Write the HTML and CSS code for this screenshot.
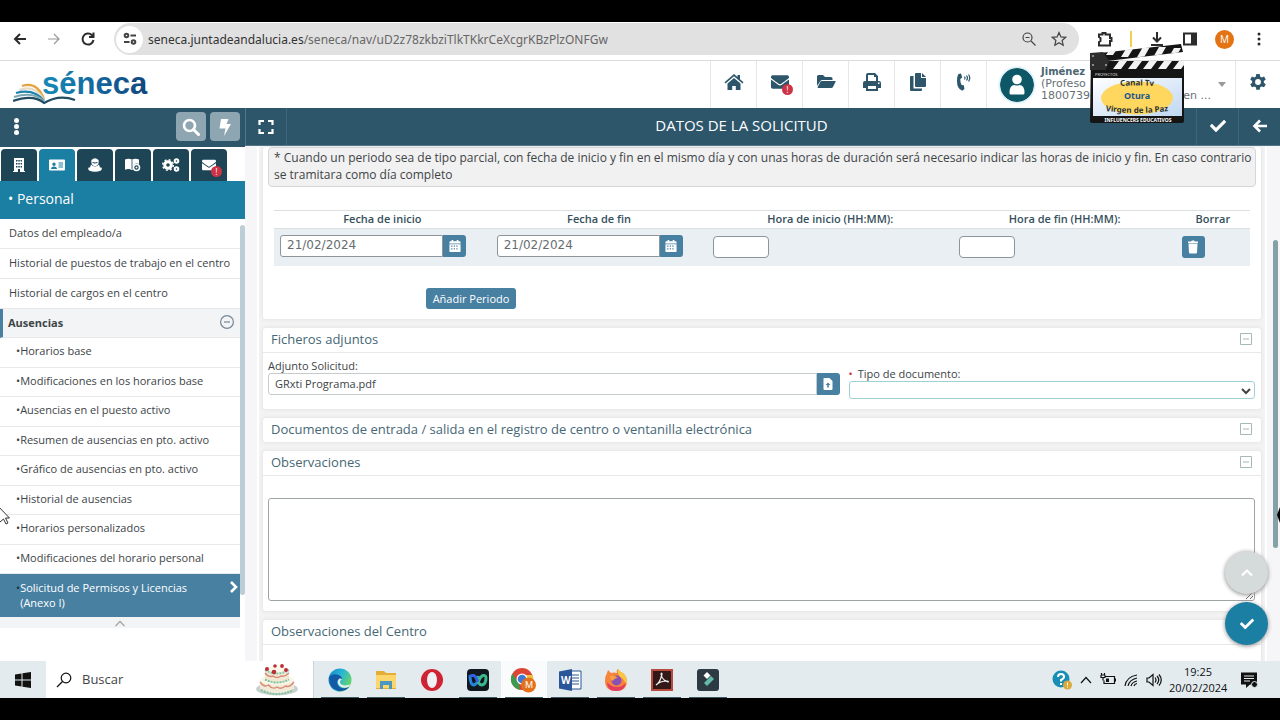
FILE: index.html
```
<!DOCTYPE html>
<html lang="es">
<head>
<meta charset="utf-8">
<meta name="viewport" content="width=device-width, initial-scale=1">
<title>Séneca - Datos de la solicitud</title>
<link rel="stylesheet" href="styles.css">
</head>
<body>
<svg class="symbols" aria-hidden="true">
  <symbol id="i-check" viewBox="0 0 512 512"><path d="M173.9 439.4l-166.400-166.400c-10-10-10-26.200 0-36.200l36.200-36.200c10-10 26.200-10 36.200 0L192 312.700 432.100 72.600c10-10 26.200-10 36.200 0l36.200 36.200c10 10 10 26.200 0 36.200l-294.400 294.400c-10 10-26.200 10-36.200 0z"/></symbol>
  <symbol id="i-mail" viewBox="0 0 512 512"><path d="M502.300 190.800c3.900-3.100 9.700-.2 9.700 4.700V400c0 26.500-21.500 48-48 48H48c-26.500 0-48-21.500-48-48V195.600c0-5 5.700-7.800 9.700-4.700 22.400 17.400 52.100 39.500 154.100 113.600 21.100 15.400 56.700 47.800 92.200 47.600 35.700.3 72-32.800 92.300-47.600 102-74.100 131.600-96.300 154-113.700zM256 320c23.200.4 56.600-29.200 73.400-41.400 132.700-96.300 142.800-104.700 173.400-128.700 5.800-4.500 9.200-11.500 9.200-18.900v-19c0-26.500-21.500-48-48-48H48C21.500 64 0 85.500 0 112v19c0 7.400 3.400 14.300 9.200 18.900 30.600 23.900 40.700 32.400 173.400 128.700 16.800 12.200 50.200 41.800 73.400 41.400z"/></symbol>
  <symbol id="i-cal" viewBox="0 0 14 14"><path fill-rule="evenodd" d="M3 0h2v1.500h4V0h2v1.500h1.500q1 0 1 1V4H.5V2.500q0-1 1-1H3zM.5 5h13v8q0 1-1 1h-11q-1 0-1-1zM2.500 6.500V8H4V6.500zm3 0V8H7V6.500zm3 0V8H10V6.500zm-6 3V11H4V9.500zm3 0V11H7V9.500zm3 0V11H10V9.500z"/></symbol>
  <symbol id="i-minus" viewBox="0 0 12 12"><path d="M.5.5h11v11H.5zM3 6h6" fill="none" stroke="currentColor"/></symbol>
  <symbol id="i-gear" viewBox="0 0 16 16"><path fill-rule="evenodd" d="M6.500 0h3l.4 2.200 1.400.8 2.100-.8 1.500 2.600-1.700 1.400v1.600l1.700 1.400-1.500 2.600-2.100-.8-1.400.8-.4 2.200h-3l-.4-2.200-1.400-.8-2.100.8-1.500-2.600 1.700-1.400V6.200L1.100 4.800l1.500-2.600 2.100.8 1.400-.8zM8 4.500a2.600 2.600 0 1 0 0 5.200 2.600 2.600 0 0 0 0-5.200z"/></symbol>
</svg>

<div class="browser">
  <button class="plain" aria-label="Atrás"><svg class="ic16" viewBox="0 0 16 16"><path class="line2" d="M14 8H3M8 3L3 8l5 5"/></svg></button>
  <button class="plain faded" aria-label="Adelante"><svg class="ic16" viewBox="0 0 16 16"><path class="line1" d="M2 8h11M8 3l5 5-5 5"/></svg></button>
  <button class="plain" aria-label="Recargar"><svg class="ic16" viewBox="0 0 16 16"><path class="line2" d="M13.500 9A5.500 5.500 0 1 1 12 4.200L13.500 5.700M13.500 1.500v4.500H9"/></svg></button>
  <div class="omnibox">
    <span class="siteinfo"><svg class="ic16" viewBox="0 0 16 16"><path class="line2" d="M8.500 4.500H14M2 11h5.500"/><circle class="line2" cx="4.500" cy="4.500" r="1.800"/><circle class="line2" cx="11.500" cy="11" r="1.800"/></svg></span>
    <span class="url">seneca.juntadeandalucia.es<span>/seneca/nav/uD2z78zkbziTlkTKkrCeXcgrKBzPlzONFGw</span></span>
    <svg class="ic16" viewBox="0 0 16 16"><circle class="line1" cx="6.500" cy="6.500" r="4.500"/><path class="line1" d="M10 10l4.500 4.500M4.500 6.500h4"/></svg>
    <svg class="ic16" viewBox="0 0 16 16"><path class="line1" d="M8 1.500l1.900 4.400 4.800.4-3.600 3.200 1.100 4.700L8 11.700l-4.200 2.500 1.100-4.700L1.300 6.300l4.800-.4z"/></svg>
  </div>
  <div class="extensions">
    <svg class="ic16" viewBox="0 0 16 16"><path class="line2" d="M2 3.500h3.500V2h3v1.500H13V7h1.500v3H13v4.500H2V11l1.500-1V7L2 6z"/></svg>
    <span class="ext-mark"></span>
    <svg class="ic16" viewBox="0 0 16 16"><path class="line2" d="M8 1v9M4 6.500L8 10.500l4-4M2 14h12"/></svg>
    <svg class="ic16" viewBox="0 0 16 16"><path class="line2" d="M2 2.500h12v11H2z"/><path d="M9 2h5v12H9z"/></svg>
    <span class="profile">M</span>
    <svg class="ic16" viewBox="0 0 16 16"><circle cx="8" cy="3" r="1.500"/><circle cx="8" cy="8" r="1.500"/><circle cx="8" cy="13" r="1.500"/></svg>
  </div>
</div>

<header class="header">
  <div class="logo">
    <svg viewBox="0 0 136 42" role="img" aria-label="séneca">
      <defs><linearGradient id="lg"><stop offset="0" stop-color="#168bb8"/><stop offset=".5" stop-color="#14689f"/><stop offset="1" stop-color="#12467c"/></linearGradient></defs>
      <text x="29" y="31" class="logo-text" fill="url(#lg)">séneca</text>
      <g fill="none" stroke-width="2.200">
        <path d="M9 23Q24 18 31 36" stroke="#e8a23d"/><path d="M6 27Q22 21 31 37" stroke="#e3dcca"/><path d="M3 30Q21 25 31 38" stroke="#1b83ac"/><path d="M1 34Q20 28 31 38" stroke="#7ca6b4"/><path d="M0 38Q20 31 31 40Q46 31 62 37" stroke="#214c62"/>
      </g>
    </svg>
  </div>
  <nav class="quick">
    <button aria-label="Inicio"><svg class="ic20" viewBox="0 0 20 20"><path d="M10 6l6.500 5.500V18h-4.700v-4H8.200v4H3.500v-6.500zM10 2l3.500 3V3H16v4.200l3.500 3-1 1.200L10 4.300l-8.500 7.100-1-1.200z"/></svg></button>
    <button aria-label="Mensajes" class="has-badge"><svg class="ic18"><use href="#i-mail"/></svg><span class="badge">!</span></button>
    <button aria-label="Carpetas"><svg class="ic20" viewBox="0 0 20 20"><path d="M1 14V4.500Q1 3 2.500 3H7l2 2h6q1.500 0 1.500 1.500V8H6.500Q5 8 4.200 9.300zM5.600 9h13.600q.8 0 .4.800L17 15q-.6 1-1.800 1H2.200q-1 0-.5-.9l2.600-5.200Q4.800 9 5.600 9z"/></svg></button>
    <button aria-label="Imprimir"><svg class="ic18" viewBox="0 0 18 18"><path fill-rule="evenodd" d="M3 8V2q0-2 2-2h7l3 3v5h1q2 0 2 2v5h-3v3H3v-3H0v-5q0-2 2-2zM5 2v6h8V4h-2V2zm0 11v3h8v-3zm10-3.500v1.500h1.500V9.500z"/></svg></button>
    <button aria-label="Copiar"><svg class="ic18" viewBox="0 0 18 18"><path d="M7 0h5v5h5v8q0 1-1 1H7q-1 0-1-1V1q0-1 1-1zm6 0l4 4h-4zM4.500 3v12.500H13V17q0 1-1 1H2q-1 0-1-1V4q0-1 1-1z"/></svg></button>
    <button aria-label="Llamar"><svg class="ic18" viewBox="0 0 18 18"><path d="M3.500 1l2.500-.5 1.200 4-1.900 1.500q-.3 3 1.300 6l2.200.2L9.500 16l-2.300 1.700Q2 16 2 8 2 3 3.500 1z"/><path class="line1" d="M9.500 3.500q1.200 1.500 0 3M11.500 2.500q2 2.500 0 5M13.500 1.500q2.500 3.500 0 7"/></svg></button>
  </nav>
  <button class="user">
    <svg class="avatar" viewBox="0 0 34 34"><circle cx="17" cy="17" r="17" fill="#0e5767"/><circle cx="17" cy="11.500" r="4.800" fill="#fff"/><path d="M9.500 25q0-8 5-8 2.500 1.200 5 0 5 0 5 8 0 1.500-1.500 1.500H11q-1.500 0-1.500-1.500z" fill="#fff"/></svg>
    <span class="user-text"><strong>Jiménez</strong><span>(Profeso</span><span class="center-name"><span>1800739</span><span>en ...</span></span></span>
    <i class="caret"></i>
  </button>
  <button class="settings" aria-label="Configuración"><svg class="ic18"><use href="#i-gear"/></svg></button>
</header>

<div class="app">
  <aside class="sidebar">
    <div class="side-tools">
      <button class="dots" aria-label="Menú"><i></i><i></i><i></i></button>
      <button class="tool" aria-label="Buscar"><svg class="ic18" viewBox="0 0 18 18"><circle cx="7.500" cy="7.500" r="5.500" fill="none" stroke="currentColor" stroke-width="2.600"/><path d="M11.500 11.500l5 5" stroke="currentColor" stroke-width="3" stroke-linecap="round"/></svg></button>
      <button class="tool" aria-label="Accesos rápidos"><svg class="ic18" viewBox="0 0 18 18"><path d="M5 1h7.500l-2 5h4.500L8 18l1.500-7.500H3.500z"/></svg></button>
    </div>
    <div class="tabs">
      <button aria-label="Centro"><svg class="ic16" viewBox="0 0 16 16"><path fill-rule="evenodd" d="M3 1h10v13h1v1H9v-3H7v3H2v-1h1zm2 2v1.500h1.500V3zm2.300 0v1.500h1.500V3zm2.300 0v1.500H11V3zM5 6v1.500h1.500V6zm2.300 0v1.500h1.500V6zm2.300 0v1.500H11V6zM5 9v1.500h1.500V9zm2.300 0v1.500h1.500V9zm2.300 0v1.500H11V9z"/></svg></button>
      <button class="active" aria-label="Personal"><svg class="ic16" viewBox="0 0 16 16"><path fill-rule="evenodd" d="M1 2.500h14q1 0 1 1v9q0 1-1 1H1q-1 0-1-1v-9q0-1 1-1zM5 5.500a1.700 1.700 0 1 0 0 3.400 1.700 1.700 0 0 0 0-3.400zM2 12h6q0-2.500-3-2.500T2 12zm7.500-6.500v1H14v-1zm0 2v1H14v-1zm0 2v1H14v-1z"/></svg></button>
      <button aria-label="Alumnado"><svg class="ic16" viewBox="0 0 16 16"><path d="M4.500 3Q8-.5 11.500 3q.8 4-1.500 5.500-2 1.500-4 0Q3.700 7 4.500 3z"/><path d="M4 7.500q4 4 8 0l1 3h1.500q1 1.500-.5 3-6 2.500-12 0-1.500-1.500-.5-3H3z"/><path d="M5.500 5.500q2.500 1 5 0" fill="none" stroke="#1d4555"/></svg></button>
      <button aria-label="Enseñanzas"><svg class="ic16" viewBox="0 0 16 16"><path d="M0 2.500Q3.500.8 7 2.500q3.500-1.700 7 0V7q-3-1.500-5 .8T8.300 12L7 13q-3.500-1.700-7-.2z"/><circle cx="11.500" cy="10.500" r="3" fill="none" stroke="currentColor" stroke-width="1.600"/><circle cx="11.500" cy="10.500" r="1"/><path d="M6.600 2.500h.8V12h-.8z" fill="#1d4555"/></svg></button>
      <button aria-label="Utilidades"><svg class="ic18" viewBox="0 0 18 16"><g fill="none" stroke="currentColor"><circle cx="6" cy="8" r="3.300" stroke-width="3"/><circle cx="6" cy="8" r="5.300" stroke-width="1.500" stroke-dasharray="2 2.160"/><circle cx="14.500" cy="4" r="1.800" stroke-width="2"/><circle cx="14.500" cy="12" r="1.800" stroke-width="2"/></g></svg></button>
      <button aria-label="Comunicaciones" class="has-badge"><svg class="ic14"><use href="#i-mail"/></svg><span class="badge">!</span></button>
    </div>
    <h2 class="side-title">• Personal</h2>
    <div class="side-body">
      <div class="menu-col">
        <ul class="menu">
          <li><a href="#">Datos del empleado/a</a></li>
          <li><a href="#">Historial de puestos de trabajo en el centro</a></li>
          <li><a href="#">Historial de cargos en el centro</a></li>
          <li class="open"><a href="#">Ausencias <svg class="ic14" viewBox="0 0 14 14"><circle class="line1" cx="7" cy="7" r="6.400"/><path class="line1" d="M4 7h6"/></svg></a></li>
        </ul>
        <ul class="menu submenu">
          <li><a href="#">Horarios base</a></li>
          <li><a href="#">Modificaciones en los horarios base</a></li>
          <li><a href="#">Ausencias en el puesto activo</a></li>
          <li><a href="#">Resumen de ausencias en pto. activo</a></li>
          <li><a href="#">Gráfico de ausencias en pto. activo</a></li>
          <li><a href="#">Historial de ausencias</a></li>
          <li><a href="#">Horarios personalizados</a></li>
          <li><a href="#">Modificaciones del horario personal</a></li>
        </ul>
        <a href="#" class="current"><span>Solicitud de Permisos y Licencias (Anexo I)</span><svg class="ic14" viewBox="0 0 14 14"><path d="M5 2l5 5-5 5" fill="none" stroke="currentColor" stroke-width="2.600"/></svg></a>
        <div class="fold"><svg class="ic14" viewBox="0 0 14 14"><path d="M2.500 10L7 5.500l4.500 4.500" fill="none" stroke="currentColor" stroke-width="1.500"/></svg></div>
      </div>
      <i class="side-scroll"></i>
    </div>
  </aside>

  <main class="main">
    <div class="title-bar">
      <button aria-label="Pantalla completa"><svg class="ic16" viewBox="0 0 16 16"><path d="M1.500 6V2H6M10 2h4.500v4M14.500 10v4H10M6 14H1.500v-4" fill="none" stroke="currentColor" stroke-width="2.200"/></svg></button>
      <h1>DATOS DE LA SOLICITUD</h1>
      <button aria-label="Aceptar"><svg class="ic16"><use href="#i-check"/></svg></button>
      <button aria-label="Volver"><svg class="ic16" viewBox="0 0 16 16"><path d="M15 8H3M8 2.500L2.500 8 8 13.500" fill="none" stroke="currentColor" stroke-width="2.600"/></svg></button>
    </div>
    <div class="scroller">
      <div class="content">
        <section class="card first">
          <p class="note">* Cuando un periodo sea de tipo parcial, con fecha de inicio y fin en el mismo día y con unas horas de duración será necesario indicar las horas de inicio y fin. En caso contrario se tramitara como día completo</p>
          <table class="periods">
            <colgroup><col class="c-date"><col class="c-date"><col class="c-start"><col class="c-end"><col></colgroup>
            <thead><tr><th id="h1">Fecha de inicio</th><th id="h2">Fecha de fin</th><th id="h3">Hora de inicio (HH:MM):</th><th id="h4">Hora de fin (HH:MM):</th><th>Borrar</th></tr></thead>
            <tbody><tr>
              <td><div class="date"><input type="text" value="21/02/2024" aria-labelledby="h1"><button aria-label="Elegir fecha de inicio"><svg class="ic12"><use href="#i-cal"/></svg></button></div></td>
              <td><div class="date"><input type="text" value="21/02/2024" aria-labelledby="h2"><button aria-label="Elegir fecha de fin"><svg class="ic12"><use href="#i-cal"/></svg></button></div></td>
              <td><input class="hour" type="text" aria-labelledby="h3"></td>
              <td><input class="hour" type="text" aria-labelledby="h4"></td>
              <td><button class="delete" aria-label="Borrar periodo"><svg class="ic14" viewBox="0 0 14 14"><path d="M2 1.500h3L6 .5h2l1 1h3V3H2zM2.500 3.500h9l-.5 9q-.1 1-1 1H4q-.9 0-1-1z"/></svg></button></td>
            </tr></tbody>
          </table>
          <button class="add">Añadir Periodo</button>
        </section>

        <section class="card">
          <h2>Ficheros adjuntos <button aria-label="Plegar"><svg class="ic12"><use href="#i-minus"/></svg></button></h2>
          <div class="files">
            <div class="field">
              <label for="file">Adjunto Solicitud:</label>
              <div class="file"><input id="file" type="text" value="GRxti Programa.pdf"><button aria-label="Adjuntar fichero"><svg class="ic12" viewBox="0 0 12 12"><path fill-rule="evenodd" d="M2 0h5.500L10.500 3v8q0 1-1 1h-7q-1 0-1-1V1q0-1 .5-1zM6 4.500L3.500 7h1.700v2.500h1.600V7h1.700z"/></svg></button></div>
            </div>
            <div class="field type">
              <label for="type"><span class="required">•</span>Tipo de documento:</label>
              <div class="select"><select id="type"><option></option></select><svg class="ic12" viewBox="0 0 12 12"><path d="M2 4l4 4 4-4" fill="none" stroke="currentColor" stroke-width="2"/></svg></div>
            </div>
          </div>
        </section>

        <section class="card closed"><h2>Documentos de entrada / salida en el registro de centro o ventanilla electrónica <button aria-label="Desplegar"><svg class="ic12"><use href="#i-minus"/></svg></button></h2></section>

        <section class="card">
          <h2>Observaciones <button aria-label="Plegar"><svg class="ic12"><use href="#i-minus"/></svg></button></h2>
          <div class="notes"><textarea aria-label="Observaciones"></textarea></div>
        </section>

        <section class="card last"><h2>Observaciones del Centro</h2></section>
      </div>
      <i class="main-scroll"></i>
    </div>
    <div class="floating">
      <button class="up" aria-label="Subir"><svg class="ic14" viewBox="0 0 14 14"><path d="M2 9.500l5-5 5 5" fill="none" stroke="currentColor" stroke-width="2.200"/></svg></button>
      <button class="ok" aria-label="Aceptar"><svg class="ic14"><use href="#i-check"/></svg></button>
    </div>
  </main>
</div>

<footer class="taskbar">
  <button class="start" aria-label="Inicio"><svg class="ic16" viewBox="0 0 16 16"><path d="M0 2.500l6.500-1v6H0zM7.500 1.300L16 0v7.500H7.500zM0 8.500h6.500v6L0 13.500zM7.500 8.500H16V16l-8.500-1.300z"/></svg></button>
  <label class="search"><svg class="ic16" viewBox="0 0 16 16"><circle class="line1" cx="10" cy="6" r="4.800"/><path class="line1" d="M6.500 9.500L1 15"/></svg><input type="text" placeholder="Buscar" aria-label="Buscar">
    <svg class="cake" viewBox="0 0 44 33"><ellipse cx="22" cy="26" rx="21" ry="6.500" fill="#c9d0cd"/><path d="M5 17v9q17 9 34 0v-9z" fill="#f2ead8"/><ellipse cx="22" cy="17" rx="17" ry="5" fill="#fbf5e6"/><path d="M10 7v10q12 6 24 0V7z" fill="#f3e8d3"/><ellipse cx="22" cy="7" rx="12" ry="4" fill="#fff8ea"/><path d="M5 19q4 6 8.500 3 4 5 8.500 2 4 3 8.500-1 4 2 8.500-4M10 10q4 5 8 3 4 3 8 0 4 1 8-3" fill="none" stroke="#d78d77" stroke-width="1.400"/><path d="M6 27q16 8 32 0M10 16.500q12 6 24 0M10 7q12 7 24 0" fill="none" stroke="#7fc3a5" stroke-width="2" stroke-dasharray="2 1"/><g fill="#b92f37"><circle cx="12" cy="6" r="2"/><circle cx="19" cy="9" r="2.300"/><circle cx="20" cy="3" r="1.800"/><circle cx="27" cy="3" r="1.900"/><circle cx="31" cy="7" r="2"/></g></svg>
  </label>
  <div class="apps">
    <button aria-label="Edge"><svg class="ic24" viewBox="0 0 24 24"><defs><linearGradient id="eg" x2="1" y2=".5"><stop offset="0" stop-color="#1586c9"/><stop offset=".55" stop-color="#28b6d5"/><stop offset="1" stop-color="#65d36d"/></linearGradient></defs><circle cx="12" cy="12" r="11.500" fill="url(#eg)"/><path d="M1 10Q3 5.500 9 6.500q5 1 5 5-3-1.500-4.500 1-1.500 4 3 7 4.500 2 9-1Q17 24 10 23 1 20.500 1 10z" fill="#1459a5"/><path d="M14 11.500q-2.500 1-2 3.500 2 4 10 1.500l-.8 2q-6 3-10-1-3-4 .3-7 1.500-.5 2.500 1z" fill="#e4edf1"/></svg></button>
    <button aria-label="Explorador"><svg class="ic24" viewBox="0 0 24 24"><path d="M2 3h8l2 2h10v16H2z" fill="#e3ad36"/><path d="M2 7h20v13H2z" fill="#fcd66b"/><path d="M6 13h12v8h-3v-4H9v4H6z" fill="#4a98bf"/></svg></button>
    <button aria-label="Opera" class="idle"><svg class="ic24" viewBox="0 0 24 24"><circle cx="12" cy="12" r="11" fill="#cf2333"/><ellipse cx="12" cy="12" rx="5" ry="8" fill="#edf1f3"/></svg></button>
    <button aria-label="Webex"><svg class="ic24" viewBox="0 0 24 24"><rect x="1" y="1" width="22" height="22" rx="4" fill="#10191f"/><g fill="none" stroke-width="3"><path d="M4 7q0 10 4 10 4-1 5-9" stroke="#2584df"/><path d="M11 8q1 9 5 9 4-1 4-7 0-3-3-2.500Q14 8.500 12 15" stroke="#3bb88c"/><path d="M4.500 9q0-2 3-1.500 3 1 4 6.500" stroke="#3560e4"/></g></svg></button>
    <button aria-label="Chrome" class="current-app"><svg class="ic28" viewBox="0 0 28 28"><circle cx="12" cy="13" r="11" fill="#dd4535"/><path d="M2.500 7.500L9 18l1 6A11 11 0 0 1 2.500 7.500z" fill="#3b9b50"/><path d="M12 9h10.500Q25 15 20 20z" fill="#efc23d"/><circle cx="12" cy="13" r="5.500" fill="#fff"/><circle cx="12" cy="13" r="4.300" fill="#3e79d5"/><circle cx="18.500" cy="19" r="7.500" fill="#e4711b"/><text x="15" y="22" class="app-m" fill="#fff">M</text></svg></button>
    <button aria-label="Word"><svg class="ic24" viewBox="0 0 24 24"><path d="M11 3h12v18H11z" fill="#fff" stroke="#2a5699"/><path d="M14 7h7M14 10h7M14 13h7M14 16h7" stroke="#2a5699"/><path d="M1 3.500L14 1v22L1 20.500z" fill="#2a5699"/><text x="3" y="16" class="app-w" fill="#fff">W</text></svg></button>
    <button aria-label="Firefox"><svg class="ic24" viewBox="0 0 24 24"><path d="M3 5l1-3 3 3q3-1 6 0-1-3 1-4 2 3 5 4 4 4 4 8 0 10-11 10T1 13q0-5 2-8z" fill="#f6843a"/><path d="M14 1q2 3 5 4 6 6 3 13-1-7-6-9-3-4-2-8z" fill="#fbc643"/><path d="M3 14q0 9 9 9t10-9q-3 5-9 5T3 14z" fill="#e43c63"/><circle cx="12.500" cy="12.500" r="5" fill="#8850b8"/><path d="M6 8q5-1 8 2-4 0-5 3-3-1-3-5z" fill="#f7a03f"/></svg></button>
    <button aria-label="Acrobat"><svg class="ic24" viewBox="0 0 24 24"><path d="M2 2h20v20H2z" fill="#321817" stroke="#b94a3e" stroke-width="2"/><path d="M6 17q4-2 6-11 0-2-1 0 1 6 7 8 1-1-1-1-7 0-11 4z" fill="none" stroke="#eee" stroke-width="1.200"/></svg></button>
    <button aria-label="Filmora"><svg class="ic24" viewBox="0 0 24 24"><rect x="1" y="1" width="22" height="22" rx="3" fill="#2d3a43"/><path d="M11 4l3.500 3.500L11 11 7.500 7.500z" fill="#fff"/><path d="M15 8l3 3-7 7-3-3z" fill="#64b9ab"/></svg></button>
  </div>
  <div class="tray">
    <svg class="ic20" viewBox="0 0 20 20"><circle cx="9" cy="9" r="8.500" fill="#188eb4"/><path d="M6 7q0-3 3-3t3 2.700Q12 8.500 9 10v1.500M9 13v2" fill="none" stroke="#fff" stroke-width="2"/><circle cx="15.500" cy="15" r="4.500" fill="#dca93b"/><path d="M15.500 12.500v3M15.500 16.500v1" stroke="#fff"/></svg>
    <svg class="ic14" viewBox="0 0 14 14"><path class="line1" d="M2 10l5-5.500L12 10"/></svg>
    <svg class="ic16" viewBox="0 0 16 16"><path class="line1" d="M5 4.500h9.500v7H4v-3M15.500 6.500v3M1 3h4M1.500 1v2M4.500 1v2M1 3v2.500h4V3M3 5.500v3"/><path d="M6 6.500h3v3.500H6z"/></svg>
    <svg class="ic16" viewBox="0 0 16 16"><g class="line1"><path d="M2 14Q3 5 14 3M5 14q1-6 9-8M8 14q1-4 6-5M11 14q.5-2 3-2.500"/></g></svg>
    <svg class="ic16" viewBox="0 0 16 16"><path class="line1" d="M1 6h2l4-3.500v11L3 10H1zM9 5.500q2 2.500 0 5M11 4q3.500 4 0 8M13 2.500q4.500 5.500 0 11"/></svg>
    <div class="clock"><span>19:25</span><span>20/02/2024</span></div>
    <svg class="ic18" viewBox="0 0 18 18"><path d="M1 1.500h16v12h-7L6 17v-3.500H1z"/><path d="M4 5h10M4 7.500h10M4 10h6" stroke="#e3ebef"/><circle cx="14.500" cy="13.500" r="3" stroke="#e3ebef"/></svg>
  </div>
</footer>

<svg class="clapper" viewBox="0 0 96 80" role="img" aria-label="Canal Tv Otura Virgen de la Paz">
  <defs><clipPath id="top-bar"><path d="M4 9L92 0l2 8L16 17z"/></clipPath><clipPath id="low-bar"><path d="M16 17h79v8H16z"/></clipPath><linearGradient id="slate" x2="1" y2="1"><stop offset="0" stop-color="#fff"/><stop offset="1" stop-color="#bfd7f2"/></linearGradient></defs>
  <path d="M2 10L92 0l2 8-76 9h77v60q0 2-2 2H3q-2 0-2-2z" fill="#151515"/>
  <path d="M1 9l13-1 6 9-3 9H1z" fill="#2d2d2d"/>
  <g clip-path="url(#top-bar)"><path d="M20 4l7 0 8 14h-7zM35 3h7l8 14h-7zM50 1h7l8 14h-7zM65 0h7l8 13h-7zM80-1h7l8 12h-7z" fill="#f3f3f3" transform="matrix(-1 0 0 1 112 0)"/></g>
  <g clip-path="url(#low-bar)"><path d="M30 17h8l-6 8h-8zM45 17h8l-6 8h-8zM60 17h8l-6 8h-8zM75 17h8l-6 8h-8zM90 17h8l-6 8h-8z" fill="#f3f3f3"/></g>
  <circle cx="4" cy="12" r="1" fill="#aaa"/><circle cx="4" cy="21" r="1" fill="#aaa"/><circle cx="17" cy="21" r="1" fill="#aaa"/>
  <text x="6" y="32" class="clap-tiny" fill="#ddd">PROYECTOS</text>
  <path d="M4 34h89v38H4z" fill="url(#slate)"/>
  <ellipse cx="48" cy="54" rx="36" ry="16.500" fill="#ffd75e"/>
  <path id="arc-top" d="M14 44Q48 39 82 44" fill="none"/><path id="arc-low" d="M10 66Q48 72 86 66" fill="none"/>
  <text class="clap-text" fill="#2c3437"><textPath href="#arc-top" startOffset="50%">Canal Tv</textPath></text>
  <text x="48" y="55" class="clap-main" fill="#23558d">Otura</text>
  <text class="clap-text" fill="#2c3437"><textPath href="#arc-low" startOffset="50%">Virgen de la Paz</textPath></text>
  <text x="49" y="78" class="clap-foot" fill="#fff">INFLUENCERS EDUCATIVOS</text>
</svg>
<svg class="pointer" viewBox="0 0 12 20"><path d="M-4-2L9.500 12H5.500l2.500 5-2 1-2.500-5L0 16" fill="#fff" stroke="#333"/></svg>
<svg class="edge-pointer" viewBox="0 0 3 16"><path d="M3 0v16L0 8z"/></svg>
</body>
</html>
```
FILE: styles.css
```
:root {
  --navy: #2d566b;
  --dark: #1d4555;
  --teal: #1b7ea3;
  --blue: #4880a2;
  --ink: #3d4447;
  --line: #e6e8e9;
}
* { box-sizing: border-box; }
body {
  margin: 0;
  height: 100vh;
  padding: 22px 0;
  display: flex;
  flex-direction: column;
  overflow: hidden;
  background: #000;
  color: var(--ink);
  font: 12px/17px "Open Sans", "Noto Sans", sans-serif;
}
button {
  display: flex;
  align-items: center;
  justify-content: center;
  flex: none;
  padding: 0;
  border: 0;
  background: none;
  color: inherit;
  font: inherit;
}
input, select, textarea { font: inherit; color: inherit; min-width: 0; }
h1, h2, p, ul { margin: 0; padding: 0; font-weight: 400; }
a { color: inherit; text-decoration: none; }
svg { flex: none; fill: currentColor; }
.symbols { position: absolute; width: 0; height: 0; }
.ic12 { width: 12px; height: 12px; }
.ic14 { width: 14px; height: 14px; }
.ic16 { width: 16px; height: 16px; }
.ic18 { width: 18px; height: 18px; }
.ic20 { width: 20px; height: 20px; }
.ic24 { width: 24px; height: 24px; }
.ic28 { width: 28px; height: 28px; }
.line1, .line2 { fill: none; stroke: currentColor; stroke-width: 1.2; }
.line2 { stroke-width: 2; }

/* Browser bar */
.browser {
  flex: none;
  height: 39px;
  display: flex;
  align-items: center;
  gap: 18px;
  padding: 0 13px 4px 12px;
  background: #fff;
  border-bottom: 1px solid #dcdcdc;
  color: #2b2b2b;
}
.faded { color: #999; }
.omnibox {
  flex: 1;
  height: 32px;
  display: flex;
  align-items: center;
  gap: 14px;
  padding: 0 12px 0 2px;
  border-radius: 16px;
  background: #e1e1e1;
  color: #444;
}
.siteinfo {
  width: 27px;
  height: 27px;
  display: grid;
  place-items: center;
  border-radius: 50%;
  background: #fff;
}
.url { flex: 1; margin-left: -9px; color: #333; font-family: "Noto Sans", sans-serif; white-space: nowrap; }
.url span { color: #666; }
.extensions { display: flex; align-items: center; gap: 17px; }
.ext-mark { width: 2px; height: 16px; background: #f0cf55; }
.profile {
  width: 19px;
  height: 19px;
  border-radius: 50%;
  background: #e37414;
  color: #fff;
  font-size: 10px;
  line-height: 19px;
  text-align: center;
}

/* Application header */
.header {
  flex: none;
  height: 47px;
  display: flex;
  background: #fff;
  color: var(--navy);
}
.logo { flex: 1; padding: 2px 0 0 13px; }
.logo svg { width: 136px; height: 42px; display: block; }
.logo-text { font: 700 31px "Liberation Sans", sans-serif; }
.quick { display: flex; }
.quick button { width: 46px; padding-bottom: 5px; border-left: 1px solid var(--line); }
.has-badge { position: relative; }
.badge {
  position: absolute;
  right: 9px;
  bottom: 13px;
  width: 11px;
  height: 11px;
  border-radius: 50%;
  background: #cc3347;
  color: #fff;
  font-size: 9px;
  line-height: 11px;
  text-align: center;
}
.user {
  width: 249px;
  justify-content: flex-start;
  gap: 7px;
  padding: 0 9px 0 13px;
  border-left: 1px solid var(--line);
  font: 11px/12px "DejaVu Sans", sans-serif;
  color: #667074;
}
.avatar { width: 34px; height: 34px; border-radius: 50%; box-shadow: 0 0 3px #8acde2; }
.user-text { display: flex; flex-direction: column; width: 172px; text-align: left; padding-bottom: 2px; white-space: nowrap; }
.user-text strong { color: #4b6673; font-size: 10px; }
.center-name { display: flex; justify-content: space-between; }
.caret { margin-left: auto; border: 4px solid transparent; border-top: 5px solid #999; border-bottom: 0; }
.settings { width: 45px; padding-bottom: 4px; border-left: 1px solid var(--line); }

/* Layout */
.app { flex: 1; min-height: 0; display: flex; background: #fff; }
.sidebar { flex: none; width: 245px; display: flex; flex-direction: column; }
.side-tools {
  flex: none;
  height: 39px;
  display: flex;
  align-items: center;
  gap: 4px;
  padding: 0 5px 2px 11px;
  background: var(--navy);
  color: #fff;
}
.dots { flex-direction: column; gap: 1px; width: 10px; margin-right: auto; }
.dots i { width: 5px; height: 5px; border-radius: 50%; background: #fff; }
.tool { width: 30px; height: 29px; border-radius: 4px; background: #8ea5b2; }
.tabs { display: flex; gap: 2px; padding: 2px 1px 0; }
.tabs button { width: 36px; height: 32px; border-radius: 4px 4px 0 0; background: var(--dark); color: #fff; }
.tabs .active { background: var(--teal); }
.tabs .badge { right: 5px; bottom: 4px; }
.side-title {
  flex: none;
  height: 38px;
  padding: 0 8px;
  background: var(--teal);
  color: #fff;
  font-size: 14px;
  line-height: 35px;
}
.side-body { display: flex; font-size: 11px; line-height: 15px; }
.menu-col { flex: 1; }
.menu { list-style: none; }
.menu a {
  height: 30px;
  display: flex;
  align-items: center;
  padding: 0 6px 2px 9px;
  border-bottom: 1px solid var(--line);
  white-space: nowrap;
}
.menu .open a { height: 29px; justify-content: space-between; border-left: 3px solid var(--blue); padding-left: 5px; background: #f3f4f5; font-weight: 700; }
.menu .open svg { color: #789; }
.submenu { display: grid; grid-auto-rows: 1fr; height: 236px; }
.submenu a { height: 100%; padding: 0 6px 3px 16px; }
.submenu a::before { content: "•"; }
.current {
  display: flex;
  padding: 6px 0 7px 16px;
  background: var(--blue);
  color: #fff;
}
.current::before { content: "•"; color: #173444; }
.current span { width: 180px; }
.current svg { margin-left: auto; }
.fold { height: 11px; display: flex; justify-content: center; align-items: center; background: #f3f4f6; color: #aaa; overflow: hidden; }
.side-scroll { width: 5px; height: 370px; margin-top: 6px; border-radius: 3px; background: #bccdd5; }

.main { flex: 1; min-width: 0; position: relative; display: flex; flex-direction: column; }
.title-bar {
  flex: none;
  height: 38px;
  display: flex;
  background: var(--navy);
  color: #fff;
  border-bottom: 1px solid #527587;
  border-left: 1px solid #527587;
}
.title-bar h1 { flex: 1; font-size: 15px; line-height: 35px; text-align: center; }
.title-bar button { width: 41px; border-right: 1px solid #3f6679; }
.title-bar h1 ~ button { width: 42px; border-right: 0; border-left: 1px solid #3f6679; padding-bottom: 2px; }
.scroller { flex: 1; min-height: 0; display: flex; gap: 6px; padding: 1px 2px 0 12px; background: #f6f6f8; overflow: hidden; }
.content { flex: 1; min-width: 0; padding: 0 4px; background: #f3f3f3; border-right: 2px solid #fff; border-left: 2px solid #fff; }
.main-scroll { flex: none; width: 5px; height: 308px; margin-top: 93px; border-radius: 3px; background: #86a1a6; }
.card { margin-bottom: 9px; border-radius: 3px; background: #fff; box-shadow: 0 0 4px #ddd; }
.card h2 {
  height: 25px;
  display: flex;
  align-items: center;
  justify-content: space-between;
  padding: 0 9px 1px 8px;
  border-bottom: 1px solid var(--line);
  color: #466775;
  font-size: 13px;
}
.card h2 button { color: #a7b8b8; }
.card.first { padding: 0 5px 10px; }
.note { padding: 1px 1px 3px 5px; border: 1px solid #d3d7d9; border-radius: 4px; background: #f1f1f1; }
.periods { width: calc(100% - 12px); margin: 23px 6px 0; border-collapse: collapse; table-layout: fixed; border-top: 1px solid #dcdfe0; }
.c-date { width: 22.200%; }
.c-start { width: 25.200%; }
.c-end { width: 22.800%; }
.periods th { height: 18px; padding: 0 0 1px; font-size: 11px; line-height: 16px; font-weight: 600; color: #35505c; border-bottom: 1px solid #dcdfe0; }
.periods td { height: 37px; padding: 0 6px; background: #e9eff2; }
.date { display: flex; width: 186px; height: 22px; margin-bottom: 3px; }
.date input { flex: 1; padding: 0 6px 2px; border: 1px solid #8c9599; border-radius: 3px 0 0 3px; font: 12px "DejaVu Sans", sans-serif; color: #666d70; }
.date button, .file button { width: 23px; border-radius: 0 3px 3px 0; background: var(--blue); color: #fff; }
.hour { display: block; width: 56px; height: 22px; border: 1px solid #8c9599; border-radius: 4px; }
.delete { width: 23px; height: 22px; border-radius: 3px; background: var(--blue); color: #fff; }
.add { width: 90px; height: 21px; margin: 22px 0 0 158px; border-radius: 3px; background: var(--blue); color: #fff; font-size: 11px; }
.files { display: flex; gap: 9px; padding: 5px 6px 10px 5px; font-size: 11px; }
.field { flex: 571; }
.field.type { flex: 406; padding-top: 8px; }
.field label { display: block; line-height: 15px; }
.file { display: flex; height: 22px; }
.file input { flex: 1; padding: 0 6px; border: 1px solid #c6cbcd; border-radius: 3px 0 0 3px; }
.required { margin-right: 5px; color: #c33; }
.select { position: relative; height: 18px; }
.select select { display: block; width: 100%; height: 18px; appearance: none; background: #fff; border: 1px solid #9fd2d6; border-radius: 3px; }
.select svg { position: absolute; right: 3px; top: 4px; pointer-events: none; }
.card.closed h2 { height: 24px; border-bottom: 0; }
.notes { padding: 22px 6px 10px 5px; }
.notes textarea { display: block; width: 100%; height: 103px; border: 1px solid #9ea4a6; border-radius: 3px; resize: vertical; }
.card.last { height: 60px; }
.floating { position: absolute; right: 12px; bottom: 16px; display: flex; flex-direction: column; gap: 8px; }
.floating button { width: 43px; height: 43px; border-radius: 50%; color: #fff; box-shadow: 0 1px 4px #888; }
.up { background: #d5dadb; }
.ok { background: var(--teal); }

/* Taskbar */
.taskbar { flex: none; height: 37px; display: flex; background: #e3ebef; color: #111; }
.start { width: 46px; }
.search { width: 268px; display: flex; align-items: center; gap: 10px; padding: 0 14px 0 10px; background: #fff; border-right: 1px solid #ccd3d6; }
.search input { flex: 1; padding: 0; border: 0; outline: 0; font-size: 13px; }
.search input::placeholder { color: #444; opacity: 1; }
.cake { width: 44px; height: 33px; }
.apps { display: flex; padding-left: 3px; }
.apps button { width: 46px; position: relative; }
.apps button::after { content: ""; position: absolute; left: 4px; right: 4px; bottom: 0; height: 1px; background: #3b5865; }
.apps .idle::after { display: none; }
.apps .current-app { background: #f9fbfc; }
.app-m { font: 9px "Noto Sans", sans-serif; }
.app-w { font: 700 10px "Noto Sans", sans-serif; }
.tray { margin-left: auto; display: flex; align-items: center; gap: 7px; padding-right: 22px; }
.clock { display: flex; flex-direction: column; width: 58px; margin-right: 6px; text-align: center; font-size: 11px; line-height: 16px; }

/* Overlays */
.clapper { position: absolute; left: 1089px; top: 44px; width: 96px; height: 80px; }
.clap-text, .clap-main, .clap-foot { text-anchor: middle; font: 700 8px "Noto Sans", sans-serif; }
.clap-main { font-size: 9px; }
.clap-foot { font-size: 5px; }
.clap-tiny { font: 4px "Noto Sans", sans-serif; }
.pointer { position: absolute; left: 0; top: 506px; width: 12px; height: 20px; }
.edge-pointer { position: absolute; right: 0; top: 507px; width: 3px; height: 16px; color: #000; }
```
